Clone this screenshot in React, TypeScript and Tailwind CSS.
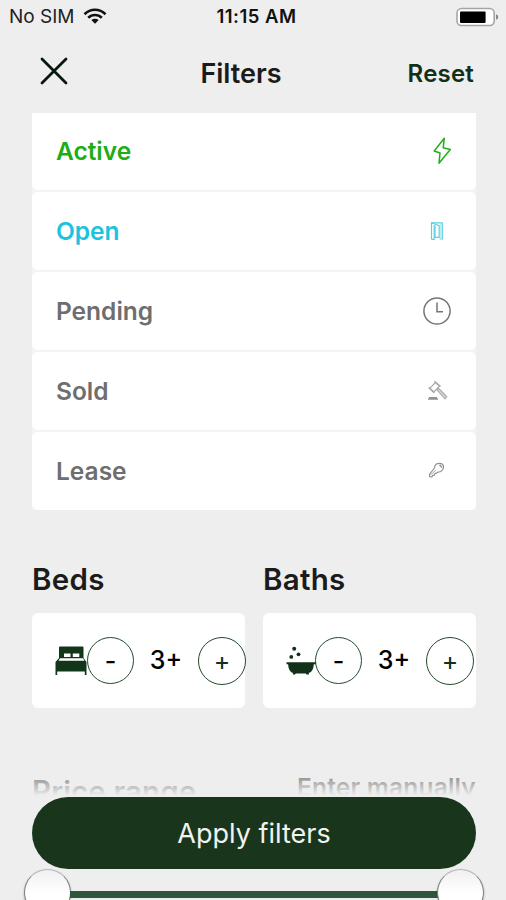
import React from 'react';

interface StatusOption {
    label: string;
    textClass: string;
    icon: React.ReactNode;
}

const BoltIcon = () => (
    <svg className="-mt-px" width="30" height="30" viewBox="0 0 30 30" fill="none" stroke="#1faf1a" strokeWidth="1.5" strokeLinejoin="round">
        <path d="M22.3 2.2 12.2 15 18 17 17 27.2 28.3 13.4 21.2 11.8Z" />
    </svg>
);

const DoorIcon = () => (
    <svg width="30" height="30" viewBox="0 0 30 30" fill="none" stroke="#5fcfe0" strokeWidth="1.2">
        <path d="M9.5 23.3V6.8H20.3V23H17.6" />
        <path d="M9.5 6.8 17.2 9.6V21.3H13V9.5" />
        <path d="M9.5 23.3H12.2V9" />
        <path d="M18.8 8V22" stroke="#b0e8f0" />
    </svg>
);

const ClockIcon = () => (
    <svg width="30" height="30" viewBox="0 0 30 30" fill="none" stroke="#757575" strokeWidth="1.5">
        <circle cx="15" cy="15" r="13.1" />
        <path d="M15 6.5V15.8H21" />
    </svg>
);

const GavelIcon = () => (
    <svg width="30" height="30" viewBox="0 0 30 30" fill="none" stroke="#a9a9a9" strokeWidth="1.2">
        <path d="M7.8 12.4 13.4 6.5 17.6 9.8 12 16Z" />
        <path d="M6.8 11.4 12.2 16.8M12.4 5.4 18.4 10.6" strokeWidth="1.6" />
        <path d="M14.8 13.6 16.3 12 24.7 20.6 23 22.8Z" fill="#dadada" />
        <path d="M6 23.1H16M7 21.8H15" stroke="#939393" strokeWidth="1.5" />
    </svg>
);

const KeyIcon = () => (
    <svg width="30" height="30" viewBox="0 0 30 30" fill="none" stroke="#929292" strokeWidth="1.2" strokeLinejoin="round">
        <path d="M12.5 12C12.6 9.3 14.6 7.4 17.4 7.4 20.1 7.4 21.5 9 21.5 11 21.5 13.8 19 16.2 16.2 16L14.5 17.2 12.8 17.7 12.2 19.2 10.5 19.6 10 20.8 7.6 20.6 7.5 18.4Z" />
        <path d="M9 18.8 14 13.8" strokeWidth="0.8" />
        <path d="M17.5 8.8 20 11.4" strokeWidth="1.5" />
    </svg>
);

const BedIcon = () => (
    <svg className="-mr-px shrink-0" width="33" height="30" viewBox="0 0 33 30" fill="#12361a">
        <path d="M4 1.5Q4 0.5 5 0.5H27.5Q28.5 0.5 28.5 1.5V12L31.5 16V29H29.8V25.5H2.2V29H0.5V16L4 12Z" />
        <path d="M9 7.5H15.5V11H9ZM17.8 7.5H24.3V11H17.8ZM5 12.2H28L29.5 14.8H3.5Z" fill="#fff" />
    </svg>
);

const BathIcon = () => (
    <svg className="-mr-px shrink-0" width="30" height="30" viewBox="0 0 30 30" fill="#12301a">
        <circle cx="8.2" cy="2.8" r="2" />
        <circle cx="12.5" cy="8.3" r="1.9" />
        <circle cx="5.3" cy="10.9" r="1.9" />
        <path d="M0.5 16.3H30V18.2H27.8C27.6 23 26 26 22.8 27L23 28.5H20.5L19.8 27.4H9.8L9 28.5H6.8L7 27C4 26 2.3 23 2.1 18.2H0.5Z" />
    </svg>
);

const WifiIcon = () => (
    <svg className="-mt-0.5" width="24" height="17" viewBox="0 0 24 17" fill="none" stroke="#111" strokeWidth="2.6">
        <path d="M1.5 6.2C7.5 0.3 16.5 0.3 22.5 6.2" />
        <path d="M5.2 9.8C9.1 6 14.9 6 18.8 9.8" />
        <path d="M8.3 12C10.5 10.3 13.5 10.3 15.7 12L12 15.7Z" fill="#111" stroke="none" />
    </svg>
);

const BatteryIcon = () => (
    <svg width="43" height="20" viewBox="0 0 43 20">
        <rect x="1" y="1.5" width="37.2" height="17" rx="4.5" fill="#fff" stroke="#a5a5a5" strokeWidth="1.6" />
        <rect x="4" y="4.5" width="25.6" height="11.5" rx="1" fill="#000" />
        <path d="M40 7.2Q42.3 7.8 42.3 10T40 12.8Z" fill="#888" />
    </svg>
);

const STATUS_OPTIONS: StatusOption[] = [
    { label: 'Active', textClass: 'text-[#1cae15]', icon: <BoltIcon /> },
    { label: 'Open', textClass: 'text-[#1bc3de]', icon: <DoorIcon /> },
    { label: 'Pending', textClass: 'text-[#6e6e6e]', icon: <ClockIcon /> },
    { label: 'Sold', textClass: 'text-[#6e6e6e]', icon: <GavelIcon /> },
    { label: 'Lease', textClass: 'text-[#6e6e6e]', icon: <KeyIcon /> },
];

const StatusRow: React.FC<{ option: StatusOption }> = ({ option }) => (
    <button className="group flex h-[78px] w-full items-center justify-between rounded-md bg-white px-6 first:h-[77px] first:rounded-t-none">
        <span className={`pt-px text-[24.5px] font-[560] group-first:pt-0 ${option.textClass}`}>{option.label}</span>
        {option.icon}
    </button>
);

interface StepperProps {
    title: string;
    value: string;
    icon: React.ReactNode;
}

const Stepper: React.FC<StepperProps> = ({ title, value, icon }) => (
    <div className="w-[213px]">
        <h2 className="text-[29.5px] leading-9 font-[560] tracking-[0.3px] text-[#1b1b1b]">{title}</h2>
        <div className="mt-[16px] flex h-[95px] items-center rounded-md bg-white pl-[23px]">
            {icon}
            <button className="flex size-[47px] shrink-0 items-center justify-center rounded-full border-[1.5px] border-[#244a2b] pt-0.5 text-[25px] font-medium text-black" aria-label={`Fewer ${title}`}>
                -
            </button>
            <span className="w-[64px] shrink-0 text-center text-[25px] font-medium text-black">{value}</span>
            <button className="flex size-[48px] shrink-0 items-center justify-center rounded-full border-[1.5px] border-[#244a2b] pt-0.5 text-[25px] text-[#12301a]" aria-label={`More ${title}`}>
                +
            </button>
        </div>
    </div>
);

const Knob = () => (
    <div className="size-[47px] shrink-0 rounded-full border-[1.5px] border-[#7c807c] border-t-[#b5b7b5] bg-linear-to-b from-[#f0f0f0] to-white to-50% shadow-[0_1px_2px_rgba(0,0,0,0.35)]" />
);

const App: React.FC = () => {
    return (
        <div className="relative flex h-[900px] w-[506px] flex-col overflow-hidden bg-[#eeeeee] font-['Inter',sans-serif]">
            <div className="grid h-[34px] shrink-0 grid-cols-3 items-center pr-[7px] pl-[9px] text-[19px]">
                <div className="flex items-center gap-[8px] text-[#222]">
                    <span className="pt-px">No SIM</span>
                    <WifiIcon />
                </div>
                <span className="pl-[5px] text-center text-[18.5px] font-[560] tracking-[0.5px] whitespace-nowrap text-[#111]">11:15 AM</span>
                <div className="flex justify-end">
                    <BatteryIcon />
                </div>
            </div>

            <header className="grid h-[79px] shrink-0 grid-cols-3 items-center px-8">
                <button aria-label="Close" className="-mt-1.5 pl-2">
                    <svg width="28" height="28" viewBox="0 0 28 28" stroke="#08170b" strokeWidth="2.8" strokeLinecap="round">
                        <path d="M2 2 26 26M26 2 2 26" />
                    </svg>
                </button>
                <h1 className="pt-0.5 pr-6 text-center text-[27px] font-[560] text-[#1b1b1b]">Filters</h1>
                <button className="text-right text-[24px] font-semibold tracking-[0.2px] text-[#10301a]">Reset</button>
            </header>

            <main className="flex h-[683px] shrink-0 flex-col overflow-hidden pr-[30px] pl-8">
                <div className="flex flex-col gap-0.5 bg-[#f4f4f4]">
                    {STATUS_OPTIONS.map((option) => (
                        <StatusRow key={option.label} option={option} />
                    ))}
                </div>

                <div className="mt-[51px] flex gap-[18px]">
                    <Stepper title="Beds" value="3+" icon={<BedIcon />} />
                    <Stepper title="Baths" value="3+" icon={<BathIcon />} />
                </div>

                <div className="mt-[65px] flex items-start justify-between">
                    <h2 className="text-[29.5px] leading-9 font-[560] tracking-[0.1px] text-[#1b1b1b]">Price range</h2>
                    <span className="text-[24.5px] leading-7 font-[560] tracking-[0.2px] text-[#1b1b1b]">Enter manually</span>
                </div>
            </main>

            <div className="absolute top-[869px] left-6 flex w-[460px] items-center justify-between">
                <Knob />
                <div className="-mx-px mt-1 h-[7px] grow bg-[#31573a]" />
                <Knob />
            </div>

            <div className="absolute inset-x-0 bottom-[31px] pr-[30px] pl-8">
                <div className="-mx-8 h-[27px] bg-linear-to-b from-[#eeeeee]/40 to-[#eeeeee] to-95%" />
                <button className="h-[72px] w-full rounded-full bg-[#19361c] pt-0.5 text-[27px] text-[#f1f3f1]">Apply filters</button>
            </div>
        </div>
    );
};

export default App;
